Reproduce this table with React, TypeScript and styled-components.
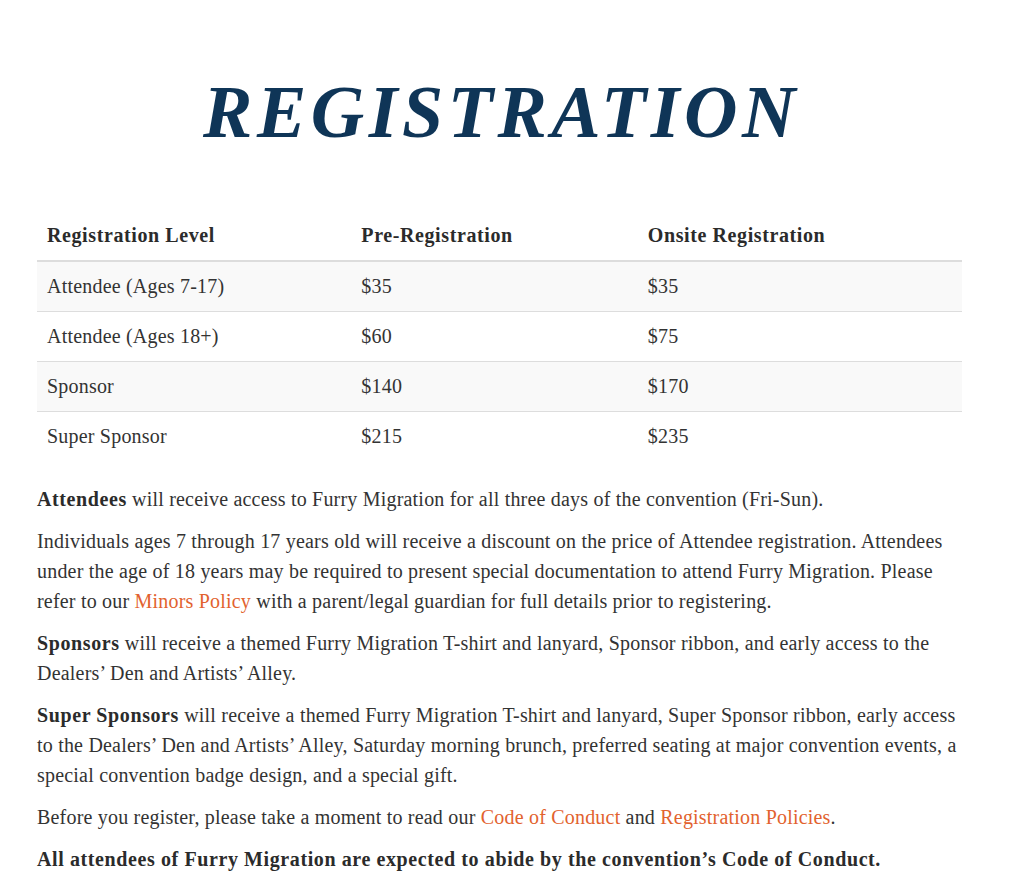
import React from "react";
import styled, { createGlobalStyle } from "styled-components";

const Global = createGlobalStyle`
  html, body { margin: 0; padding: 0; background: #fff; }
  body { font-family: "Liberation Serif", "Times New Roman", serif; color: #333; }
`;

const Page = styled.div`
  width: 925px;
  padding: 64px 0 0 37px;
`;

const Title = styled.h1`
  margin: 0;
  text-align: center;
  font-family: "Liberation Serif", serif;
  font-weight: 700;
  font-style: italic;
  font-size: 74px;
  line-height: 96px;
  letter-spacing: 4.5px;
  color: #0f3557;
  padding-left: 4px;
`;

const Table = styled.table`
  width: 925px;
  border-collapse: collapse;
  margin-top: 52px;
  margin-bottom: 23px;
  font-size: 20px;
  letter-spacing: 0.2px;
`;

const Th = styled.th<{ $w: number }>`
  width: ${(p) => p.$w}px;
  text-align: left;
  font-weight: 700;
  letter-spacing: 0.6px;
  padding: 11px 10px 12px;
  border-bottom: 2px solid #ddd;
  color: #2b2b2b;
  line-height: 25px;
`;

const Row = styled.tr<{ $odd: boolean }>`
  background: ${(p) => (p.$odd ? "#f9f9f9" : "#fff")};
`;

const Td = styled.td`
  padding: 0 10px;
  height: 49px;
  line-height: 25px;
  color: #333;
  border-top: 1px solid #ddd;
`;

const P = styled.p`
  margin: 0 0 12px;
  font-size: 20px;
  line-height: 30px;
  letter-spacing: 0.2px;
  color: #333;
`;

const B = styled.strong`
  font-weight: 700;
  letter-spacing: 0.6px;
  color: #2b2b2b;
`;

const A = styled.a`
  color: #e2622e;
  text-decoration: none;
`;

const rows = [
  ["Attendee (Ages 7-17)", "$35", "$35"],
  ["Attendee (Ages 18+)", "$60", "$75"],
  ["Sponsor", "$140", "$170"],
  ["Super Sponsor", "$215", "$235"],
];

export default function App() {
  return (
    <>
      <Global />
      <Page>
        <Title>REGISTRATION</Title>
        <Table>
          <thead>
            <tr>
              <Th $w={315}>Registration Level</Th>
              <Th $w={284}>Pre-Registration</Th>
              <Th $w={326}>Onsite Registration</Th>
            </tr>
          </thead>
          <tbody>
            {rows.map((r, i) => (
              <Row key={i} $odd={i % 2 === 0}>
                {r.map((c, j) => (
                  <Td key={j}>{c}</Td>
                ))}
              </Row>
            ))}
          </tbody>
        </Table>
        <P>
          <B>Attendees</B> will receive access to Furry Migration for all three days of the
          convention (Fri-Sun).
        </P>
        <P>
          Individuals ages 7 through 17 years old will receive a discount on the price of Attendee
          registration. Attendees under the age of 18 years may be required to present special
          documentation to attend Furry Migration. Please refer to our <A href="#">Minors Policy</A>{" "}
          with a parent/legal guardian for full details prior to registering.
        </P>
        <P>
          <B>Sponsors</B> will receive a themed Furry Migration T-shirt and lanyard, Sponsor
          ribbon, and early access to the Dealers’ Den and Artists’ Alley.
        </P>
        <P>
          <B>Super Sponsors</B> will receive a themed Furry Migration T-shirt and lanyard,
          Super Sponsor ribbon, early access to the Dealers’ Den and Artists’ Alley, Saturday morning
          brunch, preferred seating at major convention events, a special convention badge design, and
          a special gift.
        </P>
        <P>
          Before you register, please take a moment to read our <A href="#">Code of Conduct</A> and{" "}
          <A href="#">Registration Policies</A>.
        </P>
        <P>
          <B>All attendees of Furry Migration are expected to abide by the convention’s Code of
          Conduct.</B>
        </P>
      </Page>
    </>
  );
}
